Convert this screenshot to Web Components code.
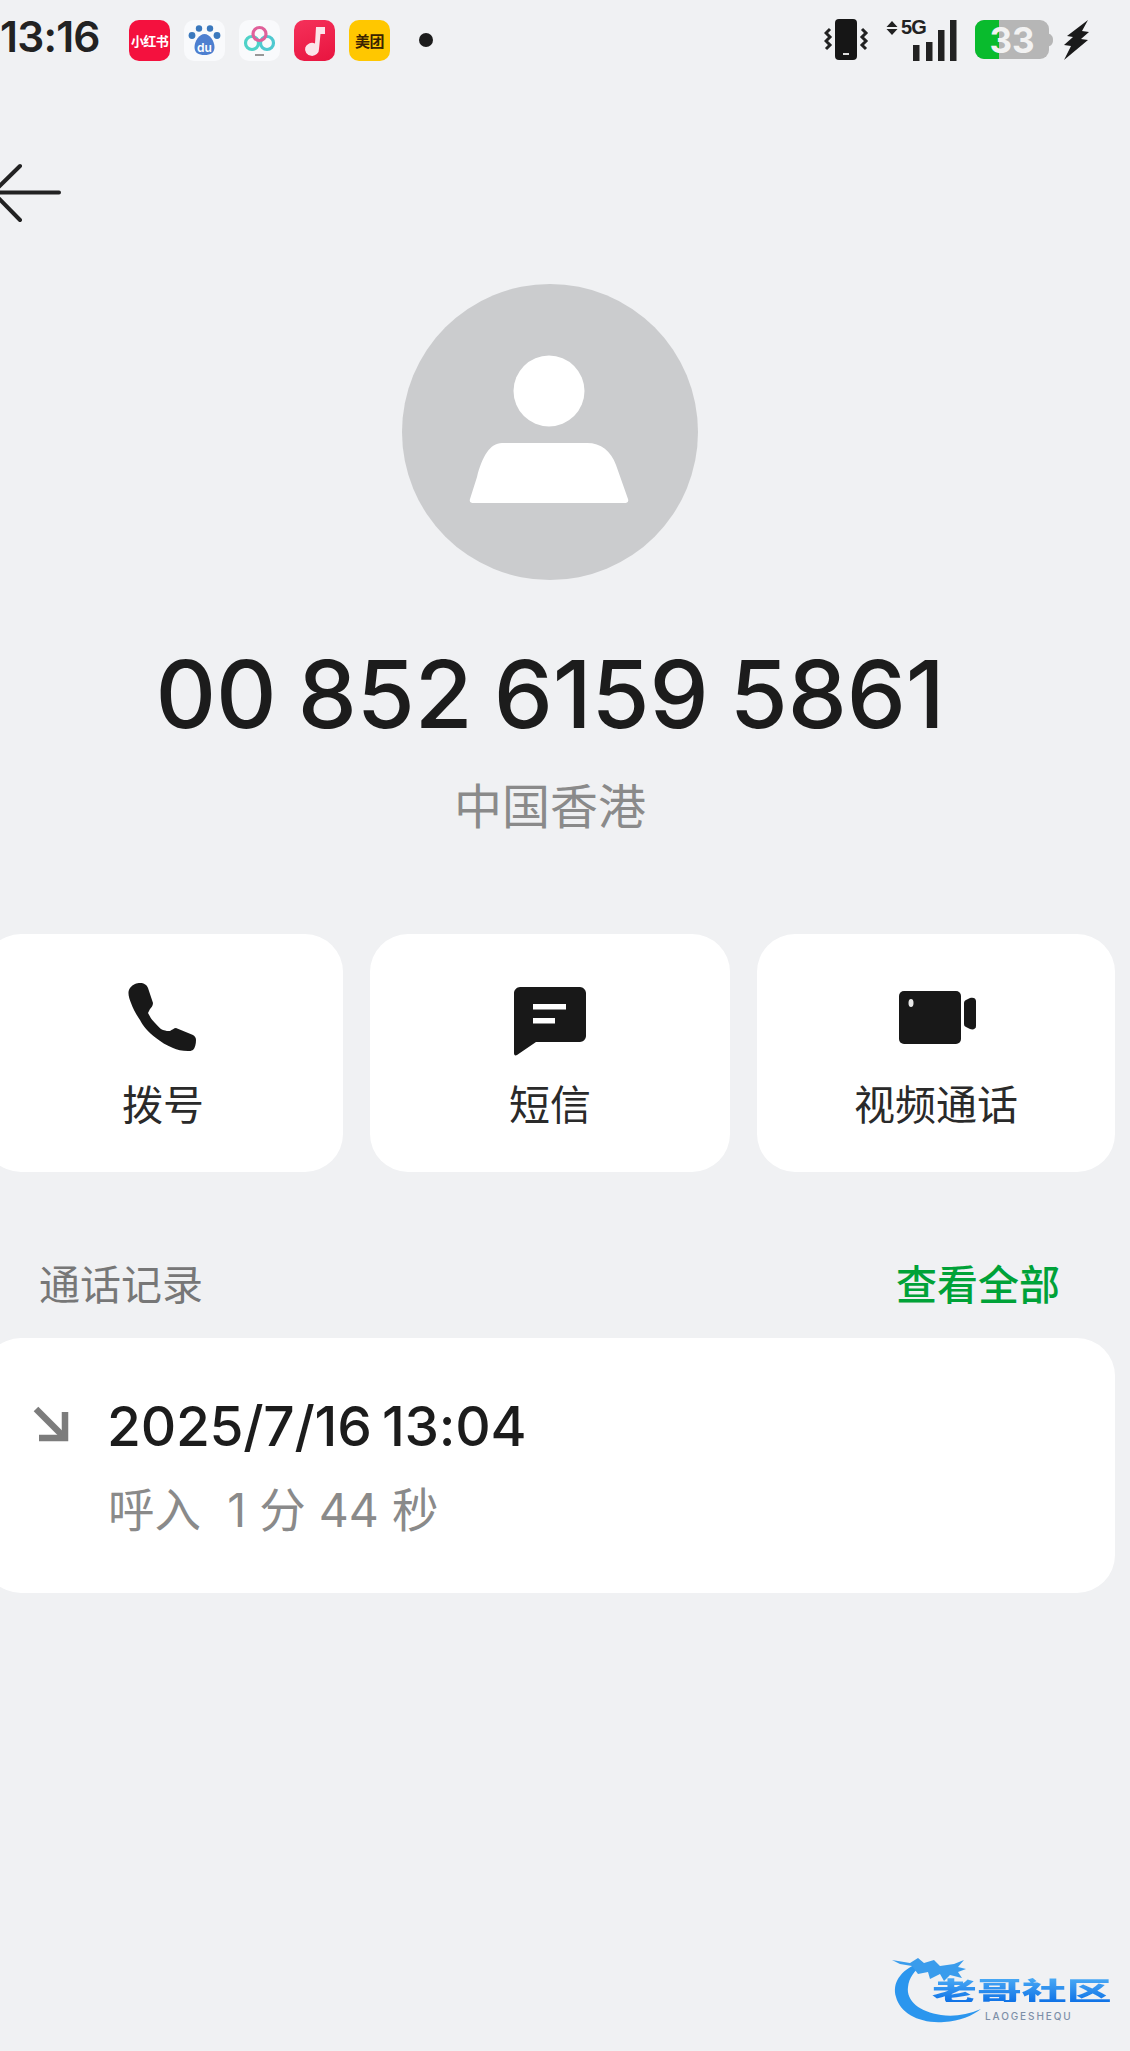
<!DOCTYPE html>
<html lang="zh-CN">
<head>
<meta charset="utf-8">
<title>通话详情</title>
<style>
html,body{margin:0;padding:0;background:#f0f1f3}
body{width:1130px;height:2051px;overflow:hidden;font-family:"Inter","Noto Sans CJK SC",sans-serif}
</style>
</head>
<body>
<call-detail-page>
  <status-bar slot="status" time="13:16"></status-bar>
  <back-nav slot="nav"></back-nav>
  <contact-head slot="head" number="00 852 6159 5861" region="中国香港"></contact-head>
  <action-row slot="actions">
    <action-card label="拨号" icon="phone"></action-card>
    <action-card label="短信" icon="message"></action-card>
    <action-card label="视频通话" icon="video"></action-card>
  </action-row>
  <section-head slot="section" title="通话记录" link="查看全部"></section-head>
  <call-record slot="record" date="2025/7/16 13:04" detail="呼入&#160;&#160;1 分 44 秒"></call-record>
  <site-mark slot="mark"></site-mark>
</call-detail-page>

<script>
function mount(el, html){ el.attachShadow({mode:'open'}).innerHTML = html; }

customElements.define('call-detail-page', class extends HTMLElement{
  connectedCallback(){ mount(this, `<style>
    :host{display:flex;flex-direction:column;position:relative;width:1130px;height:2051px;overflow:hidden;background:#f0f1f3;color:#1b1b1b}
  </style>
  <slot name="status"></slot><slot name="nav"></slot><slot name="head"></slot>
  <slot name="actions"></slot><slot name="section"></slot><slot name="record"></slot><slot name="mark"></slot>`); }
});

customElements.define('status-bar', class extends HTMLElement{
  connectedCallback(){ mount(this, `<style>
    :host{display:flex;align-items:center;height:80px;flex:none;box-sizing:border-box}
    .time{font:600 42.500px/1 "Inter","Liberation Sans",sans-serif;margin:-6px 0 0 0;width:129px;color:#222;letter-spacing:-.8px;white-space:nowrap}
    .apps{display:flex;align-items:center;gap:14px}
    .app{width:41px;height:41px;border-radius:10px;display:flex;align-items:center;justify-content:center;flex:none;overflow:hidden}
    .red{background:#f4113e;color:#fff;font:700 13px/1 "Noto Sans CJK SC",sans-serif;letter-spacing:-.6px;white-space:nowrap}
    .white{background:#f9fafc}
    .music{background:linear-gradient(160deg,#f5315a,#e8143f)}
    .yellow{background:#ffc700;color:#3a2300;font:700 15px/1 "Noto Sans CJK SC",sans-serif;letter-spacing:-.4px;white-space:nowrap}
    .dot{width:14px;height:14px;border-radius:50%;background:#1c1c1c;margin-left:15px;flex:none}
    .right{margin-left:auto;margin-right:41px;display:flex;align-items:center;height:60px}
    svg{display:block}
  </style>
  <div class="time">${this.getAttribute('time')}</div>
  <div class="apps">
    <div class="app red">小红书</div>
    <div class="app white"><svg width="41" height="41" viewBox="0 0 41 41">
      <circle cx="15" cy="8.5" r="3.2" fill="#3a78bd"/><circle cx="26" cy="8.5" r="3.2" fill="#3a78bd"/>
      <circle cx="8" cy="15.5" r="3.4" fill="#3a78bd"/><circle cx="33" cy="15.5" r="3.4" fill="#3a78bd"/>
      <path d="M20.5 14c-5 0-10 7-10 13 0 6 4 8 10 8s10-2 10-8c0-6-5-13-10-13z" fill="#4d7fd0"/>
      <text x="20.5" y="32" text-anchor="middle" font-family="Inter,sans-serif" font-size="12" font-weight="600" fill="#fff">du</text></svg></div>
    <div class="app white"><svg width="41" height="41" viewBox="0 0 41 41" fill="none" stroke-width="3.2">
      <circle cx="13" cy="23" r="6.5" stroke="#4fd2c8"/><circle cx="28" cy="23" r="6.5" stroke="#4fc9d0"/>
      <circle cx="20.5" cy="14" r="6.5" stroke="#e0609a"/>
      <path d="M16 35h9" stroke="#777" stroke-width="1.5"/></svg></div>
    <div class="app music"><svg width="41" height="41" viewBox="0 0 41 41">
      <path d="M22 7h9v7h-4.500l-1.500 15a7 6.500 0 1 1-4-5.500z" fill="#fbe4ea"/></svg></div>
    <div class="app yellow">美团</div>
    <div class="dot"></div>
  </div>
  <div class="right">
    <svg width="45" height="42" viewBox="0 0 45 42" fill="none">
      <rect x="11" y="0" width="22" height="41" rx="4" fill="#161616"/>
      <rect x="19" y="34" width="6" height="2" fill="#ddd"/>
      <path d="M6 10L2 14l4 4-4 4 4 4-4 4M38 10l4 4-4 4 4 4-4 4 4 4" stroke="#222" stroke-width="3"/>
    </svg>
    <svg style="margin-left:17px" width="72" height="56" viewBox="0 -6 72 56">
      <path d="M5 2l5.500 6H-.5zM5 16l5.500-6H-.5z" transform="translate(1 1)" fill="#222"/>
      <text x="15" y="16" font-family="'Liberation Sans',sans-serif" font-weight="700" font-size="20" letter-spacing="-.8" fill="#222">5G</text>
      <path d="M27 43V27h6.500v16zM40 43V24h6.500v19zM52 43V12h6.500v31zM64 43V2h6.500v41z" fill="#222"/>
    </svg>
    <svg style="margin-left:17px" width="78" height="42" viewBox="0 0 78 42">
      <path d="M72 14c4 1 6 3 6 7s-2 6-6 7z" fill="#b6b6b6"/>
      <rect x="0" y="1" width="74" height="39" rx="9" fill="#b6b6b6"/>
      <path d="M9 1h15v39H9a9 9 0 0 1-9-9V10a9 9 0 0 1 9-9z" fill="#09bb2d"/>
      <text x="37" y="34" text-anchor="middle" font-family="Inter,sans-serif" font-weight="700" font-size="35" fill="#f2f2f2">33</text>
    </svg>
    <svg style="margin-left:10px" width="26" height="42" viewBox="0 0 26 42">
      <path d="M25 1L4 17l6 1-9 8 7 1-7 14 24-20-7-1 8-7-7-1z" fill="#1a1a1a"/>
    </svg>
  </div>`); }
});

customElements.define('back-nav', class extends HTMLElement{
  connectedCallback(){ mount(this, `<style>
    :host{display:block;height:60px;margin-top:83px;flex:none}
    svg{display:block}
  </style>
  <svg width="64" height="60" viewBox="0 0 64 60" fill="none" stroke="#222" stroke-width="4" stroke-linecap="round" stroke-linejoin="miter">
    <path d="M-4 29.500H59M20 3L-7 29.500 20 57"/>
  </svg>`); }
});

customElements.define('contact-head', class extends HTMLElement{
  connectedCallback(){ mount(this, `<style>
    :host{display:flex;flex-direction:column;align-items:center;flex:none;margin-top:61px;padding-right:30px}
    .avatar{width:296px;height:296px;border-radius:50%;background:#cbccce}
    svg{display:block}
    .num{font:500 94px/100px "Inter","Liberation Sans",sans-serif;margin-top:64px;color:#1c1c1c;white-space:nowrap;letter-spacing:-.2px;word-spacing:-3.5px}
    .region{font:400 48px/50px "Noto Sans CJK SC",sans-serif;color:#8a8a8a;margin-top:34px}
  </style>
  <div class="avatar"><svg width="296" height="296" viewBox="0 0 296 296">
    <circle cx="147" cy="107" r="35.500" fill="#fff"/>
    <path d="M100 159h85c14 0 24 8 29 22l12 34c1 3-1 4-4 4H72c-3 0-5-1-4-4l7-22c5-20 13-34 25-34z" fill="#fff"/>
  </svg></div>
  <div class="num">${this.getAttribute('number')}</div>
  <div class="region">${this.getAttribute('region')}</div>`); }
});

customElements.define('action-row', class extends HTMLElement{
  connectedCallback(){ mount(this, `<style>
    :host{display:grid;grid-template-columns:360px 360px 358px;column-gap:27px;height:238px;margin:106px 0 0 -17px;flex:none}
  </style><slot></slot>`); }
});

const ICONS = {
  phone:`<svg width="84" height="74" viewBox="-7 -1 84 74"><path fill="#181818" d="M2 5C5 1 9 0 12 0c4 0 7 2 8 5l5 15c0 3-2 5-3 6l-2 4c2 4 4 7 7 10 3 3 5 6 8 7 3 1 5 1 7 1 2-1 4-3 6-3l17 7c2 1 3 3 3 5 0 4-1 8-3 10-2 1-3 1-5 1-6 0-11-1-15-3C38 62 33 59 28 55 20 49 15 43 12 37 8 31 5 26 3 20 1 15-1 9 2 5z"/></svg>`,
  message:`<svg width="84" height="74" viewBox="-6 -5 84 74"><path fill="#181818" d="M6 0h60c3 0 6 3 6 6v43c0 3-3 6-6 6H22L3 68c-2 1-3 0-3-2V6c0-3 3-6 6-6z"/><path fill="#fff" d="M19 17h33v5.500H19zM19 31h22v5.500H19z"/></svg>`,
  video:`<svg width="84" height="74" viewBox="-5 -9 84 74"><rect x="0" y="0" width="62" height="53" rx="5" fill="#181818"/><path fill="#181818" d="M71 7c3-1 6 0 6 3v25c0 3-3 4-6 3l-4-2c-2-1-2-2-2-4V13c0-2 0-3 2-4z"/><ellipse cx="12" cy="12" rx="2.500" ry="4" fill="#e8e8e8"/></svg>`
};
customElements.define('action-card', class extends HTMLElement{
  connectedCallback(){ mount(this, `<style>
    :host{display:flex;flex-direction:column;align-items:center;background:#fff;border-radius:38px;box-sizing:border-box;padding-top:48px}
    svg{display:block}
    .label{font:400 41px/50px "Noto Sans CJK SC",sans-serif;color:#2a2a2a;margin-top:21px;white-space:nowrap}
  </style>${ICONS[this.getAttribute('icon')]}<div class="label">${this.getAttribute('label')}</div>`); }
});

customElements.define('section-head', class extends HTMLElement{
  connectedCallback(){ mount(this, `<style>
    :host{display:flex;justify-content:space-between;align-items:center;height:50px;margin-top:85px;padding:0 70px 0 39px;flex:none}
    .t{font:400 41px/50px "Noto Sans CJK SC",sans-serif;color:#777}
    .l{font:500 41px/50px "Noto Sans CJK SC",sans-serif;color:#00a238}
  </style><div class="t">${this.getAttribute('title')}</div><div class="l">${this.getAttribute('link')}</div>`); }
});

customElements.define('call-record', class extends HTMLElement{
  connectedCallback(){ mount(this, `<style>
    :host{display:flex;align-items:flex-start;box-sizing:border-box;height:255px;width:1132px;margin:31px 0 0 -17px;background:#fff;border-radius:38px;padding:58px 0 0 50px;flex:none}
    svg{display:block;flex:none;margin-top:10px}
    .col{margin-left:38px}
    .date{font:500 55px/60px "Inter","Liberation Sans",sans-serif;color:#1c1c1c;white-space:nowrap;word-spacing:-4px;letter-spacing:-.25px}
    .sub{font:400 46.500px/50px "Inter","Noto Sans CJK SC",sans-serif;color:#8a8a8a;margin:29px 0 0 1px;white-space:nowrap}
  </style>
  <svg width="36" height="36" viewBox="0 0 36 36" fill="none" stroke="#7c7c7c" stroke-width="6.500">
    <path d="M3 3l28 28"/><path d="M32 6v26H6"/>
  </svg>
  <div class="col"><div class="date">${this.getAttribute('date')}</div><div class="sub">${this.getAttribute('detail')}</div></div>`); }
});

customElements.define('site-mark', class extends HTMLElement{
  connectedCallback(){ mount(this, `<style>
    :host{display:block;position:absolute;left:890px;top:1955px;width:226px;height:72px}
    svg{position:absolute;left:0;top:0}
    .zh{position:absolute;left:42px;top:15px;width:182px;white-space:nowrap;font:900 44px/40px "Noto Sans CJK SC",sans-serif;
      background:linear-gradient(180deg,#4aaaf5,#0f72e6);-webkit-background-clip:text;background-clip:text;color:transparent;
      transform:scale(1.02,.6);transform-origin:0 50%}
    .en{position:absolute;left:95px;top:55px;font:500 10px/12px "Inter",sans-serif;letter-spacing:1.9px;color:#7d8fa8;white-space:nowrap}
  </style>
  <svg width="226" height="72" viewBox="0 0 226 72">
    <path d="M28 8C10 16 2 28 6 42c4 16 24 27 48 25 16-1 28-6 37-13-14 6-28 8-40 6C30 57 16 46 18 32c1-9 6-16 14-22z" fill="#2b96ee"/>
    <path d="M2 5l18 3 8-5 6 5 10-3 6 6 14-2 10-4-6 7 8 2-8 3 4 6-12-3-6 6-4-7-10 5-2-7-10 2-6-8-12-2z" fill="#3a9cec"/>
  </svg>
  <div class="zh">老哥社区</div>
  <div class="en">LAOGESHEQU</div>`); }
});
</script>
</body>
</html>
